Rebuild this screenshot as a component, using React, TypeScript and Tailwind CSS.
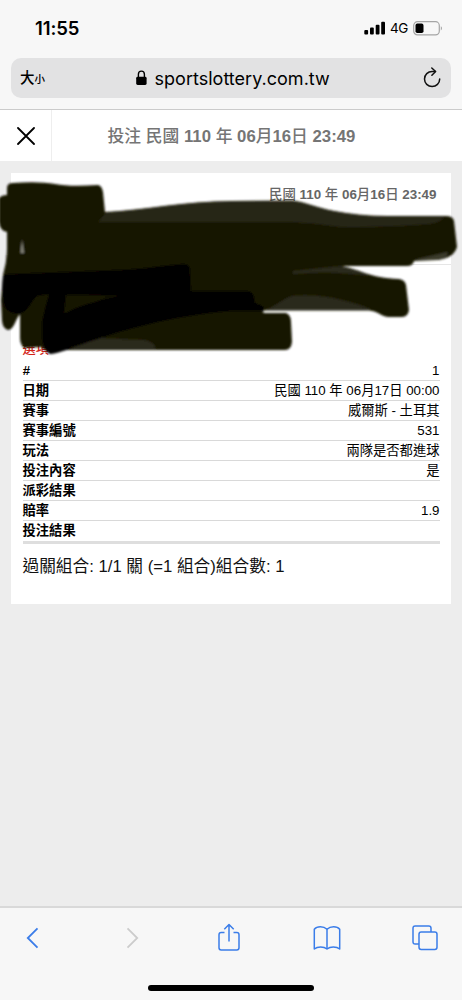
import { clsx } from "clsx";

type BetRow = {
  label: string;
  value?: string;
};

const rows: BetRow[] = [
  { label: "#", value: "1" },
  { label: "日期", value: "民國 110 年 06月17日 00:00" },
  { label: "賽事", value: "威爾斯 - 土耳其" },
  { label: "賽事編號", value: "531" },
  { label: "玩法", value: "兩隊是否都進球" },
  { label: "投注內容", value: "是" },
  { label: "派彩結果" },
  { label: "賠率", value: "1.9" },
  { label: "投注結果" },
];

// Chinese glyphs get a medium weight, latin text and digits stay bold
function MixedText({ text }: { text: string }) {
  return text.split(/([\u4e00-\u9fff]+)/).map((part, i) => (
    <span key={i} className={i % 2 === 1 ? "font-medium" : "font-bold"}>
      {part}
    </span>
  ));
}

function StatusBar() {
  return (
    <div className="flex h-[58px] items-start justify-between pt-[17px] pr-[19px] pl-[35px]">
      <span className="text-[18.5px] leading-[22px] font-semibold tracking-[-0.1px]">
        11:55
      </span>
      <div className="flex items-center pt-px">
        <svg width="22" height="14" viewBox="0 0 22 14">
          <rect x="0.3" y="9" width="3.8" height="4.5" rx="1" />
          <rect x="6" y="6.5" width="3.8" height="7" rx="1" />
          <rect x="11.7" y="3.8" width="3.8" height="9.7" rx="1" />
          <rect x="17.2" y="0.7" width="3.8" height="12.8" rx="1" />
        </svg>
        <span className="ml-[4px] w-[18px] text-[13.5px] leading-5 tracking-[-0.4px]">
          4G
        </span>
        <svg
          className="ml-[5px]"
          width="30"
          height="15"
          viewBox="0 0 30 15"
          fill="none"
        >
          <rect
            x="0.7"
            y="0.7"
            width="25.6"
            height="13.2"
            rx="3.8"
            stroke="#a5a5a5"
            strokeWidth="1.2"
          />
          <rect x="2.5" y="2.6" width="8" height="9.4" rx="1.8" fill="#000" />
          <path d="M27.8 5.2c1.6.6 1.6 3.6 0 4.2z" fill="#a5a5a5" />
        </svg>
      </div>
    </div>
  );
}

function AddressBar() {
  return (
    <div className="mx-[11px] flex h-10 items-center justify-between rounded-[10px] bg-[#e2e2e3] pr-[9px] pl-[9px]">
      <div className="flex w-[64px] items-baseline font-['Noto_Sans_CJK_TC',sans-serif] leading-5 font-medium">
        <span className="text-[14.5px]">大</span>
        <span className="text-[10.5px]">小</span>
      </div>
      <div className="flex items-center">
        <svg width="11" height="16" viewBox="0 0 11 16">
          <rect x="0.2" y="6.8" width="10.4" height="8.2" rx="1.4" />
          <path
            d="M2.4 7.2V4.3a3 3.2 0 0 1 6 0v2.9"
            fill="none"
            stroke="#000"
            strokeWidth="1.4"
          />
        </svg>
        <span className="ml-[8px] w-[174px] pt-px text-[18px] leading-6 tracking-[0.02px] whitespace-nowrap">
          sportslottery.com.tw
        </span>
      </div>
      <div className="flex w-[62px] justify-end">
        <svg
          width="20"
          height="22"
          viewBox="0 0 20 22"
          fill="none"
          stroke="#111"
          strokeWidth="1.5"
          strokeLinecap="round"
          strokeLinejoin="round"
        >
          <path d="M17.7 12a7.6 7.6 0 1 1-7.6-7.6h3.2" />
          <path d="M9.8 1l3.8 3.5-3.7 3.8" />
        </svg>
      </div>
    </div>
  );
}

function PageHeader() {
  return (
    <div className="flex h-[51px] bg-white">
      <div className="flex w-[52px] items-center justify-center border-r border-[#eeeeee]">
        <svg width="18" height="18" viewBox="0 0 18 18">
          <path
            d="M1 1l16 16M17 1L1 17"
            stroke="#000"
            strokeWidth="1.8"
            strokeLinecap="round"
          />
        </svg>
      </div>
      <h1 className="flex-1 pt-0.5 pr-[51px] text-center text-[16.75px] leading-[49px] whitespace-nowrap text-[#757575]">
        <MixedText text="投注 民國 110 年 06月16日 23:49" />
      </h1>
    </div>
  );
}

function Scribble() {
  return (
    <svg
      className="pointer-events-none absolute top-[170px] left-0"
      width="462"
      height="190"
      viewBox="0 170 462 190"
    >
      <defs>
        <filter id="soft" x="-5%" y="-5%" width="110%" height="110%">
          <feGaussianBlur stdDeviation="0.9" />
        </filter>
      </defs>
      <g filter="url(#soft)">
        {/* marker body */}
        <path
          d="M7 188Q7 183 13 183Q38 181 55 184Q70 187 98 185Q102 186 103 192L105 212C145 210 185 201 231 201L292 200.5C306 202 317 208 334 211Q360 216 388 216L446 216Q453 216 454 221L457 247Q454 258 438 260L414 261Q413 266 407 266L341 266C358 269 370 278 399 279Q405 280 406 285L409 310Q408 317 402 317L388 317C381 316 377 311 369 310.5L262 310.5L264 313L286 313Q291 315 291 322L292 342Q291 350 285 350L67 350Q57 351 50 354L41 347L24 348Q20 344 20 338L20 314C15 320 14 330 8 330Q3 329 2 321L1 300L3 275Q7 261 7 248L7 232Q0 231 -1 222L-1 198Q2 195 7 195Z"
          fill="#191603"
        />
        {/* single-pass areas are a bit lighter */}
        <path
          d="M98 222L106 212.5C145 210 185 201.5 231 201.5L290 201C306 202 317 208 334 211Q360 216.5 388 217L444 217Q442 222 430 224Q385 228 340 227Q315 223 290 222Z"
          fill="#272618"
        />
        <path
          d="M264 310C275 307 282 299 292 296C320 293 351 301 373 310Z"
          fill="#2a291a"
        />
        <path
          d="M293 271L341 266Q360 270 370 276Q330 270 293 274Z"
          fill="#2a291a"
        />
        <path
          d="M58 349Q72 340 86 337.5L144 340Q154 341 156 349Z"
          fill="#2a291a"
        />
        <path d="M413 260L447 252Q450 257 438 260Z" fill="#3a3a2c" />
        {/* overlapping strokes turn black */}
        <path
          d="M3 277Q4 274 10 274L118 270C145 269 165 265 184 264Q190 264 190 270L191 291L247 291Q253 291 254 297L255 303L263 306L264 311L231 311C170 316 120 330 66 350Q55 354 50 354Q43 349 42 338L42 322Q45 307 49 294L37 296C32 300 29 310 22 313Q12 315 6 309Q1 302 3 277Z"
          fill="#020200"
        />
        <path
          d="M66 295Q100 295 122 295.5Q107 297 95 302Q77 306 64 314Z"
          fill="#191603"
        />
        <path d="M22 239L24 253L20.5 253Z" fill="#85857a" />
      </g>
    </svg>
  );
}

function BetSlip() {
  return (
    <section className="mx-[11px] mt-3 h-[431px] bg-white pr-[11.5px] pl-[11.5px]">
      <div className="h-[91px] pt-[12px] pr-[3px] text-right text-[13.4px] leading-5 text-[#666]">
        <MixedText text="民國 110 年 06月16日 23:49" />
      </div>
      <div className="-mx-[11px] border-t border-[#e6e6e6]" />
      <div className="pt-[74px] pb-[2px] text-[13.2px] leading-[20px] font-medium text-[#d32418]">
        選項
      </div>
      <dl>
        {rows.map((row, i) => (
          <div
            key={row.label}
            className={clsx(
              "flex justify-between text-[13.3px] leading-[20px] text-black",
              i === rows.length - 1
                ? "h-[22.5px] border-b-[3px] border-[#dedede]"
                : "h-[20.05px] border-b border-[#d9d9d9]",
            )}
          >
            <dt className={clsx("font-bold", row.label === "#" && "italic")}>
              {row.label}
            </dt>
            <dd>{row.value}</dd>
          </div>
        ))}
      </dl>
      <p className="pt-[10.3px] text-[16.7px] leading-[26px] whitespace-nowrap text-[#111]">
        過關組合: 1/1 關 (=1 組合)組合數: 1
      </p>
    </section>
  );
}

function BottomBar() {
  return (
    <nav className="h-[94px] border-t-2 border-[#d9d9d9] bg-[#f7f7f7]">
      <div className="flex h-[60px] items-center pl-[26px] text-[#3b7de9]">
        <svg width="13" height="22" viewBox="0 0 13 22" fill="none">
          <path
            d="M11.5 1.3L1.8 11l9.7 9.7"
            stroke="currentColor"
            strokeWidth="1.8"
          />
        </svg>
        <svg
          className="ml-[87px]"
          width="13"
          height="22"
          viewBox="0 0 13 22"
          fill="none"
        >
          <path
            d="M1.5 1.3L11.2 11l-9.7 9.7"
            stroke="#cccccc"
            strokeWidth="1.8"
          />
        </svg>
        <svg
          className="ml-[78px]"
          width="24"
          height="30"
          viewBox="0 0 24 30"
          fill="none"
          stroke="currentColor"
          strokeWidth="1.5"
          strokeLinejoin="round"
        >
          <path d="M7.5 9.5H4.2Q2 9.5 2 11.7V24.8Q2 27 4.2 27H19.8Q22 27 22 24.8V11.7Q22 9.5 19.8 9.5H16.5" />
          <path d="M12 18.5V1.5M7.3 6.2L12 1.5l4.7 4.7" />
        </svg>
        <svg
          className="ml-[72px]"
          width="28"
          height="26"
          viewBox="0 0 28 26"
          fill="none"
          stroke="currentColor"
          strokeWidth="1.5"
          strokeLinejoin="round"
        >
          <path d="M14 4.2C10.5 .8 4 .8 1.3 4.2V24C4.5 21.3 10.8 21.3 14 24C17.2 21.3 23.5 21.3 26.7 24V4.2C24 .8 17.5 .8 14 4.2z" />
          <path d="M14 4.2V24" />
        </svg>
        <svg
          className="ml-[71px]"
          width="26"
          height="26"
          viewBox="0 0 26 26"
          fill="none"
          stroke="currentColor"
          strokeWidth="1.5"
        >
          <rect x="7" y="7" width="18" height="17.5" rx="2.2" />
          <path d="M7 19H3.2Q1 19 1 16.8V3.2Q1 1 3.2 1H16.8Q19 1 19 3.2V7" />
        </svg>
      </div>
      <div className="mx-auto mt-[17px] h-[6px] w-[166px] rounded-full bg-black" />
    </nav>
  );
}

export default function App() {
  return (
    <div className="relative flex h-[1000px] w-[462px] flex-col overflow-hidden bg-[#ededed] font-['Liberation_Sans','Noto_Sans_CJK_TC',sans-serif] text-black">
      <header className="h-[110px] border-b border-[#cbcbcb] bg-[#f7f7f7] font-['Inter',sans-serif]">
        <StatusBar />
        <AddressBar />
      </header>
      <main className="flex-1">
        <PageHeader />
        <BetSlip />
      </main>
      <BottomBar />
      <Scribble />
    </div>
  );
}
